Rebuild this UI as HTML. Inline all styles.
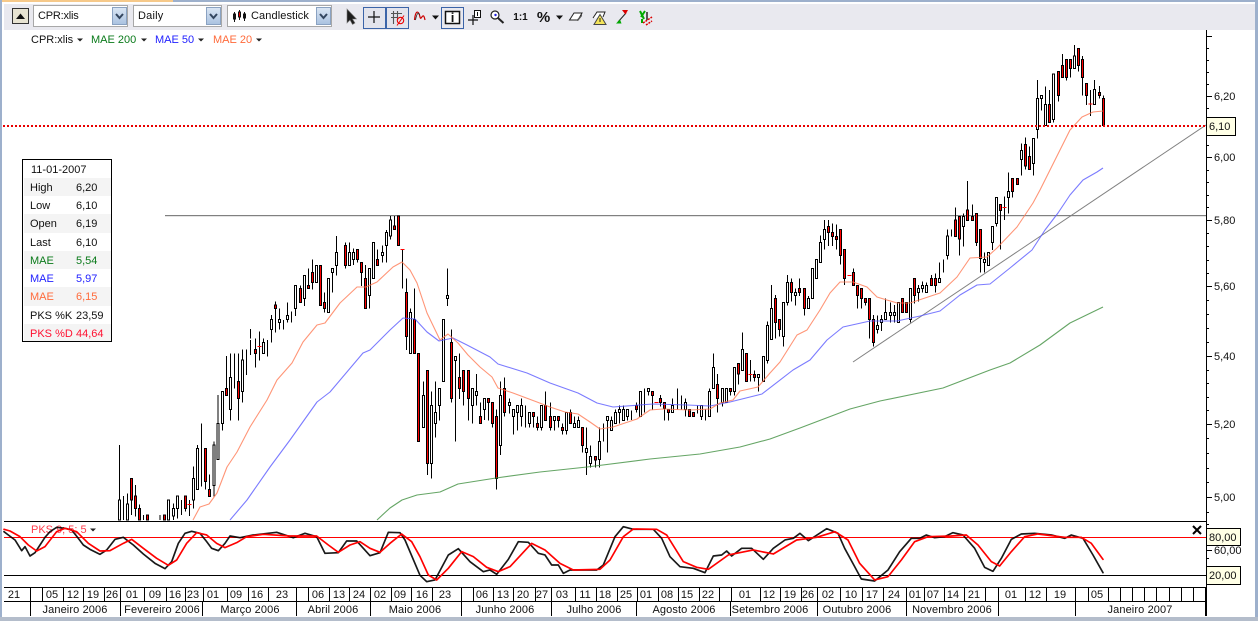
<!DOCTYPE html>
<html><head><meta charset="utf-8"><title>CPR:xlis</title>
<style>
html,body{margin:0;padding:0;background:#fff;width:1258px;height:621px;overflow:hidden}
svg{display:block}
text{font-family:"Liberation Sans",sans-serif;font-size:11px;fill:#111}
.m{text-anchor:middle}
</style></head><body>
<svg width="1258" height="621" viewBox="0 0 1258 621" xmlns="http://www.w3.org/2000/svg">
<defs>
<clipPath id="c"><rect x="2" y="30" width="1204" height="491"/></clipPath>
<linearGradient id="b" x1="0" y1="0" x2="0" y2="1"><stop offset="0" stop-color="#dbe6f4"/><stop offset="1" stop-color="#a9c2e0"/></linearGradient>
</defs>
<rect width="1258" height="621" fill="#fff"/>
<!-- frame -->
<rect x="0" y="0" width="173" height="2" fill="#f6c98a"/>
<rect x="173" y="0" width="1085" height="2" fill="#9db0cc"/>
<rect x="0" y="0" width="2" height="621" fill="#9db0cc"/>
<rect x="1255" y="0" width="3" height="621" fill="#9db0cc"/>
<rect x="0" y="617" width="1258" height="4" fill="#b4bdcb"/>
<!-- toolbar -->
<rect x="4" y="4" width="1251" height="26" fill="#e9e9ef"/>
<rect x="12.5" y="8.5" width="16" height="15" fill="#e8e4d2" stroke="#333"/>
<path d="M16 19L20.5 13.5L25 19Z" fill="#111"/>
<g fill="#fff" stroke="#a8a8a8"><rect x="33.5" y="5.5" width="94" height="21"/><rect x="133.5" y="5.5" width="88" height="21"/><rect x="227.5" y="5.5" width="104" height="21"/></g>
<g fill="url(#b)" stroke="#8aa2c2"><rect x="112.5" y="7.5" width="14" height="17"/><rect x="206.5" y="7.5" width="14" height="17"/><rect x="316.5" y="7.5" width="14" height="17"/></g>
<g fill="none" stroke="#33465f" stroke-width="2"><path d="M116 14L119.5 18L123 14"/><path d="M210 14L213.500 18L217 14"/><path d="M320 14L323.500 18L327 14"/></g>
<text x="38" y="19" style="letter-spacing:-.2px">CPR:xlis</text><text x="138" y="19" style="letter-spacing:.2px">Daily</text><text x="251" y="19" style="letter-spacing:.1px">Candlestick</text>
<path d="M234.500 12V22M239.500 10V20M244.500 12V21" stroke="#111"/>
<path d="M233.500 14h2v5h-2zM243.500 14h2v4h-2z" fill="#111" stroke="#111"/><path d="M238.500 12h2v5h-2z" fill="#e00" stroke="#111"/>
<!-- tool icons -->
<path d="M347 9V23L350 20L352.500 24.500L355 23L352.500 19H356.500Z" fill="#1d1d1d" stroke="#777" stroke-width=".6"/>
<rect x="363.500" y="7.500" width="22" height="21" fill="#e3e4ec" stroke="#3b64a8" stroke-width="1"/>
<rect x="386.500" y="7.500" width="22" height="21" fill="#e3e4ec" stroke="#3b64a8"/>
<rect x="441.500" y="7.500" width="22" height="21" fill="#e9e9ef" stroke="#3b64a8"/>
<path d="M374 11V23M368 17H380" stroke="#111" stroke-width="1.200" fill="none"/>
<path d="M393.500 11V24M397.500 11V20M391 13.500H402M391 17.500H398" stroke="#555" stroke-width="1.100" fill="none"/>
<circle cx="400.500" cy="20.500" r="3.200" fill="none" stroke="#e00" stroke-width="1.100"/><path d="M397 25.500L404 15.500" stroke="#e00"/>
<path d="M414.500 20C415.500 10 418.500 10 420 17C421 22 423 10 425 20" fill="none" stroke="#c00" stroke-width="1.200"/>
<path d="M415.500 20C417 12 419 12 419.500 15" fill="none" stroke="#222" stroke-width=".8"/>
<path d="M432 15.500H439L435.500 19.500Z" fill="#111"/>
<rect x="445.500" y="11.500" width="14" height="12" fill="#fff" stroke="#111" stroke-width="1.500"/>
<text x="452.500" y="22" class="m" style="font-weight:bold;font-size:13px">i</text>
<path d="M473 15V25M468 20H478" stroke="#111" stroke-width="1.200"/>
<rect x="474.500" y="10.500" width="6" height="7" fill="#fff" stroke="#111"/><path d="M477.500 12V16" stroke="#111"/>
<circle cx="495" cy="15" r="4" fill="#fff" stroke="#222" stroke-width="1.200"/><circle cx="495.500" cy="15" r="1.200" fill="#22d"/>
<path d="M498 18L503.500 23" stroke="#222" stroke-width="2"/>
<text x="520.500" y="20" class="m" style="font-weight:bold;font-size:10px">1:1</text>
<text x="543.500" y="22" class="m" style="font-weight:bold;font-size:15px">%</text>
<path d="M556 15.500H563L559.500 19.500Z" fill="#111"/>
<path d="M569.500 20L574 13H582L578 20H570Z" fill="#fff" stroke="#222"/><path d="M576 20.500L582 14.500V16L578 21Z" fill="#555"/>
<path d="M593 18L597 12H605L603 17" fill="#fff" stroke="#222"/>
<path d="M600 14.500L606 24.500H594Z" fill="#f4e45a" stroke="#444"/><path d="M600 18V22" stroke="#222"/>
<path d="M618 22L626 13" stroke="#222"/><path d="M616 23.500L620 19.500L621.500 23.500Z" fill="#0a0"/><path d="M622 10H628L625.500 14.500Z" fill="#d00"/>
<path d="M640 11L644 19M645 11L641 17M642 19V23" stroke="#0a0" stroke-width="2" fill="none"/><path d="M647 12V20" stroke="#555" stroke-width="2"/><path d="M643 23L652 17M646 25L652 21" stroke="#d00" stroke-width="1.500" stroke-dasharray="2 1"/>
<!-- legend -->
<text x="31" y="43">CPR:xlis</text><path d="M77 38.500h6l-3 3z" fill="#222"/>
<text x="91" y="43" style="fill:#0a7a1a">MAE 200</text><path d="M141 38.500h6l-3 3z" fill="#222"/>
<text x="155" y="43" style="fill:#2222ff">MAE 50</text><path d="M198 38.500h6l-3 3z" fill="#222"/>
<text x="213" y="43" style="fill:#ff6a3a">MAE 20</text><path d="M256 38.500h6l-3 3z" fill="#222"/>
<!-- horizontal + trend -->
<path d="M165 215.500H1206" stroke="#808080" fill="none"/>
<path d="M165 216.500H1206" stroke="#e4e4e4" fill="none"/>
<path d="M853 362L1206 125" stroke="#808080" fill="none"/>
<!-- candles -->
<g clip-path="url(#c)" shape-rendering="crispEdges">
<g transform="translate(100 210) scale(.33333)">
<path fill="none" stroke="#000" stroke-width="3" d="M58 705V930M70 858V930M82 850V930M94 805V915M106 825V920M118 883V930M130 915V930M142 915V930M180 915V930M193 915V930M205 870V930M220 880V930M232 858V925M244 870V915M256 858V905M268 870V918M280 770V895M292 705V838M304 640V830M316 715V838M328 793V860M342 695V860M354 555V748M367 544V662M379 438V557M391 430V632M403 430V535M415 430V632M427 418V578M439 418V495M451 357V385M451 390V435M466 385V472M478 365V452M490 385V430M502 390V440M514 315V398M526 275V368M538 295V358M550 330V358M562 277V338M574 305V338M586 226V318M601 226V277M613 196V288M625 175V235M637 148V238M649 166V217M661 166V286M673 248V308M685 205V307M697 175V248M709 78V197M736 97V176M748 97V166M760 115V165M772 118V158M784 157V228M796 165V295M808 175V295M820 97V205M832 118V166M847 106V158M859 60V158M871 18V88M883 18V58M895 18V106M907 118V236M919 205V420M931 295V430M943 235V430M955 430V694M970 514V652M982 481V795M994 544V805M1006 514V682"/>
<path fill="#fff" stroke="#000" stroke-width="3" d="M55 870h6V930h-6zM79 882h6V930h-6zM202 870h6V930h-6zM217 895h6V918h-6zM229 858h6V895h-6zM277 805h6V870h-6zM289 715h6V838h-6zM339 705h6V826h-6zM351 640h6V748h-6zM364 544h6V640h-6zM388 502h6V598h-6zM424 450h6V544h-6zM487 397h6V430h-6zM511 328h6V358h-6zM535 328h6V338h-6zM559 316h6V328h-6zM583 226h6V295h-6zM610 196h6V265h-6zM646 166h6V217h-6zM682 205h6V307h-6zM694 175h6V187h-6zM706 127h6V166h-6zM745 127h6V166h-6zM757 127h6V148h-6zM805 175h6V257h-6zM817 97h6V205h-6zM844 127h6V136h-6zM856 67h6V106h-6zM868 30h6V78h-6zM928 307h6V430h-6zM967 556h6V652h-6zM991 586h6V760h-6zM1003 607h6V640h-6z"/>
<path fill="#f00" stroke="#000" stroke-width="3" d="M91 805h6V870h-6zM103 858h6V895h-6zM115 895h6V930h-6zM139 915h6V930h-6zM190 915h6V930h-6zM253 858h6V895h-6zM313 715h6V815h-6zM325 838h6V860h-6zM376 535h6V557h-6zM412 514h6V565h-6zM463 418h6V430h-6zM523 285h6V295h-6zM598 235h6V277h-6zM622 226h6V235h-6zM634 187h6V217h-6zM658 166h6V286h-6zM670 277h6V295h-6zM733 106h6V166h-6zM769 118h6V148h-6zM781 157h6V187h-6zM793 205h6V295h-6zM829 148h6V166h-6zM880 48h6V58h-6zM892 18h6V106h-6zM916 247h6V380h-6zM940 328h6V430h-6zM952 430h6V694h-6zM979 481h6V760h-6z"/>
<path fill="none" stroke="#f00" stroke-width="3" d="M262 883h12M472 409h12M901 118h12"/>
</g>
<g transform="translate(400 210) scale(.33333)">
<path fill="none" stroke="#000" stroke-width="3" d="M118 535V632M130 328V515M142 175V288M154 358V578M166 440V695M178 430V567M190 481V587M205 481V632M217 535V640M229 492V587M241 578V640M253 565V630M265 565V632M277 577V652M289 598V838M301 514V735M313 502V620M328 565V610M340 598V674M352 586V662M364 565V650M376 586V652M388 607V652M400 607V652M412 620V662M424 586V662M436 544V632M451 577V662M463 619V662M475 619V652M487 640V674M499 607V674M511 598V640M523 620V652M535 620V652M547 652V728M559 652V795M571 706V772M586 740V772M598 652V772M610 640V694M622 620V728M634 620V662M646 598V640M658 586V640M670 586V632M682 598V632M694 602V630M709 578V607M721 544V620M733 535V607M745 535V556M757 544V598M781 555V590M793 577V632M805 598V632M817 565V607M832 535V598M844 556V598M856 565V620M868 598V619M880 607V619M892 586V610M904 586V630M916 598V632M928 535V620M940 430V535M952 492V607M967 535V590M979 535V578M991 535V556M1003 472V556M1015 460V523"/>
<path fill="#fff" stroke="#000" stroke-width="3" d="M115 535h6V586h-6zM127 328h6V515h-6zM139 256h6V266h-6zM163 440h6V451h-6zM214 535h6V586h-6zM226 544h6V556h-6zM250 565h6V598h-6zM298 556h6V706h-6zM325 577h6V586h-6zM337 598h6V619h-6zM349 586h6V607h-6zM361 586h6V619h-6zM385 607h6V640h-6zM421 586h6V652h-6zM460 619h6V632h-6zM496 607h6V662h-6zM520 640h6V652h-6zM532 632h6V652h-6zM556 715h6V728h-6zM568 740h6V760h-6zM595 694h6V748h-6zM619 620h6V632h-6zM631 632h6V662h-6zM643 607h6V640h-6zM655 598h6V607h-6zM667 598h6V632h-6zM679 598h6V620h-6zM718 544h6V619h-6zM742 535h6V544h-6zM814 586h6V607h-6zM853 577h6V598h-6zM901 586h6V619h-6zM925 544h6V620h-6zM937 472h6V535h-6zM964 535h6V578h-6zM976 535h6V578h-6zM1000 472h6V544h-6z"/>
<path fill="#f00" stroke="#000" stroke-width="3" d="M151 397h6V565h-6zM175 502h6V535h-6zM187 481h6V544h-6zM202 481h6V565h-6zM238 619h6V640h-6zM262 565h6V577h-6zM274 577h6V640h-6zM286 619h6V805h-6zM310 535h6V607h-6zM397 607h6V619h-6zM409 640h6V652h-6zM433 586h6V632h-6zM448 619h6V652h-6zM472 619h6V632h-6zM484 652h6V662h-6zM508 607h6V640h-6zM544 652h6V706h-6zM583 740h6V750h-6zM706 586h6V598h-6zM754 544h6V556h-6zM778 565h6V577h-6zM790 577h6V596h-6zM802 598h6V607h-6zM865 598h6V619h-6zM877 607h6V619h-6zM949 523h6V565h-6zM988 535h6V544h-6zM1012 460h6V492h-6z"/>
<path fill="none" stroke="#f00" stroke-width="3" d="M763 577h12"/>
</g>
<g transform="translate(730 170) scale(.33333)">
<path fill="none" stroke="#000" stroke-width="3" d="M37 487V602M49 550V634M61 570V635M73 601V635M85 613V665M100 559V634M112 455V580M124 345V508M136 375V505M148 448V500M160 397V530M172 315V407M184 325V395M196 355V407M208 325V378M223 355V437M235 378V415M247 295V385M259 268V325M271 197V277M283 150V238M295 150V228M307 160V228M319 163V238M331 178V283M343 238V345M370 295V346M382 346V415M394 355V415M406 385V406M418 385V505M430 435V530M442 437V490M454 435V483M466 385V450M481 397V458M493 405V458M505 397V457M517 385V427M529 397V427M541 355V458M553 325V400M565 345V395M577 335V367M589 337V367M604 315V346M616 310V367M628 277V337M640 268V308M652 178V268M664 178V200M676 112V199M688 139V257M700 130V230M712 33V152M727 103V152M739 130V228M751 178V308M763 248V308M775 247V287M787 170V240M799 82V170M811 103V238M823 80V150"/>
<path fill="#fff" stroke="#000" stroke-width="3" d="M34 538h6V602h-6zM82 613h6V623h-6zM97 559h6V634h-6zM109 466h6V571h-6zM121 415h6V508h-6zM157 397h6V500h-6zM169 337h6V397h-6zM193 367h6V376h-6zM232 385h6V415h-6zM244 295h6V385h-6zM256 268h6V325h-6zM268 217h6V277h-6zM280 178h6V208h-6zM439 466h6V478h-6zM451 448h6V458h-6zM463 427h6V448h-6zM478 427h6V437h-6zM490 427h6V437h-6zM502 397h6V457h-6zM538 355h6V448h-6zM562 355h6V367h-6zM574 346h6V355h-6zM586 346h6V367h-6zM625 325h6V337h-6zM649 198h6V257h-6zM697 139h6V170h-6zM760 268h6V277h-6zM772 247h6V287h-6zM784 170h6V217h-6zM796 82h6V160h-6z"/>
<path fill="#f00" stroke="#000" stroke-width="3" d="M46 550h6V634h-6zM70 613h6V623h-6zM133 385h6V458h-6zM145 448h6V478h-6zM181 337h6V367h-6zM205 355h6V367h-6zM220 355h6V415h-6zM292 170h6V187h-6zM304 187h6V200h-6zM316 200h6V208h-6zM328 178h6V257h-6zM340 238h6V325h-6zM367 307h6V346h-6zM379 346h6V376h-6zM391 355h6V385h-6zM403 385h6V397h-6zM415 385h6V448h-6zM427 448h6V517h-6zM514 385h6V427h-6zM526 397h6V427h-6zM550 325h6V376h-6zM601 325h6V346h-6zM613 325h6V346h-6zM673 150h6V199h-6zM685 139h6V207h-6zM709 120h6V152h-6zM724 139h6V152h-6zM736 130h6V217h-6zM748 178h6V265h-6zM808 103h6V122h-6z"/>
<path fill="none" stroke="#f00" stroke-width="3" d="M55 613h12M352 316h12M817 112h12"/>
</g>
<g transform="translate(990 30) scale(.33333)">
<path fill="none" stroke="#000" stroke-width="3" d="M55 427V550M67 445V503M82 445V463M94 340V437M106 322V418M118 350V418M130 325V437M142 150V325M154 196V242M166 170V287M178 180V277M190 132V277M205 124V214M217 72V142M229 88V152M241 88V142M253 45V115M265 55V124M277 78V197M289 160V225M301 180V258M313 150V223M328 168V205M340 196V287"/>
<path fill="#fff" stroke="#000" stroke-width="3" d="M52 485h6V502h-6zM91 362h6V388h-6zM127 325h6V400h-6zM139 205h6V298h-6zM151 196h6V205h-6zM163 223h6V287h-6zM187 132h6V268h-6zM250 78h6V115h-6zM310 178h6V223h-6z"/>
<path fill="#f00" stroke="#000" stroke-width="3" d="M64 445h6V485h-6zM79 445h6V463h-6zM103 343h6V408h-6zM115 380h6V418h-6zM175 223h6V277h-6zM202 124h6V196h-6zM214 106h6V142h-6zM226 88h6V142h-6zM238 88h6V115h-6zM262 55h6V106h-6zM274 88h6V142h-6zM286 160h6V196h-6zM325 187h6V196h-6zM337 205h6V287h-6z"/>
<path fill="none" stroke="#f00" stroke-width="3" d="M295 222h12"/>
</g>
</g>
<!-- moving averages -->
<g clip-path="url(#c)" fill="none" stroke-width="1.100" stroke-linejoin="round">
<polyline stroke="#3f8f3f" opacity=".8" points="377,520 390,508 402,500 417,495 440,492 458,484 496,478 540,472 587,467 650,459 700,454 740,447 770,439 800,428 850,409 880,401 943,388 990,370 1010,363 1040,345 1070,323 1103,307"/>
<polyline stroke="#5a5aff" opacity=".8" points="230,520 247,500 270,467 290,440 317,402 330,392 363,353 370,350 390,330 403,318 415,319 427,332 439,341 453,338 467,345 490,357 498,364 527,373 550,383 578,393 597,403 613,407 653,404 687,405 710,406 730,402 762,394 793,370 810,360 827,340 843,327 870,321 897,321 920,316 940,311 960,295 977,285 990,284 1010,268 1032,250 1045,230 1058,213 1070,195 1083,180 1097,172 1103,168"/>
<polyline stroke="#ff7a55" opacity=".8" points="193,520 200,507 209,504 217,493 227,467 237,452 250,427 267,400 277,380 292,363 303,342 317,325 325,323 340,303 357,287 366,287 377,282 393,267 402,262 410,270 417,283 427,313 440,340 448,334 458,343 468,355 480,367 492,377 498,388 513,393 537,402 550,407 565,412 578,414 590,422 600,429 613,427 637,419 650,410 663,409 690,410 710,409 720,403 733,400 740,391 758,387 770,373 780,362 797,335 807,330 820,310 830,293 840,282 853,282 867,287 877,297 897,303 910,303 940,293 957,277 970,258 987,257 997,248 1017,227 1033,203 1040,190 1050,170 1070,130 1082,117 1093,112 1103,111"/>
</g>
<!-- last price dotted -->
<path d="M3 126H1206" stroke="#e80000" stroke-width="2" stroke-dasharray="2 2" fill="none" shape-rendering="crispEdges"/>
<!-- right axis -->
<g shape-rendering="crispEdges" stroke="#000" fill="none">
<path d="M1206.500 30V616"/>
<path d="M1206 36.500h6M1206 96.500h6M1206 157.500h6M1206 220.500h6M1206 286.500h6M1206 356.500h6M1206 424.500h6M1206 497.500h6"/>
<path d="M1206 48.500h3M1206 60.500h3M1206 72.500h3M1206 84.500h3M1206 108.500h3M1206 120.500h3M1206 133.500h3M1206 145.500h3M1206 170.500h3M1206 182.500h3M1206 195.500h3M1206 207.500h3M1206 233.500h3M1206 246.500h3M1206 260.500h3M1206 273.500h3M1206 300.500h3M1206 314.500h3M1206 328.500h3M1206 342.500h3M1206 370.500h3M1206 383.500h3M1206 397.500h3M1206 410.500h3M1206 438.500h3M1206 453.500h3M1206 468.500h3M1206 482.500h3M1206 512.500h3M1206 524.500h3M1206 533.500h3M1206 541.500h3M1206 558.500h3M1206 567.500h3"/>
<path d="M1206 550.500h6"/>
</g>
<g><text x="1214" y="100">6,20</text><text x="1214" y="161">6,00</text><text x="1214" y="224">5,80</text><text x="1214" y="290">5,60</text><text x="1214" y="360">5,40</text><text x="1214" y="428">5,20</text><text x="1214" y="501">5,00</text><text x="1214" y="554">60,00</text></g>
<!-- stochastic -->
<g shape-rendering="crispEdges" fill="none">
<path d="M4 521.500H1206" stroke="#000"/>
<path d="M4 537.500H1206" stroke="#f00"/>
<path d="M4 575.500H1206" stroke="#000"/>
<path d="M4 587.500H1206" stroke="#000"/>
<path d="M4 601.500H1206" stroke="#000"/>
</g>
<text x="31" y="533" style="fill:#ff3a4a">PKS 9; 5; 5</text><path d="M90 528.500h6l-3 3z" fill="#222"/>
<g transform="scale(.33333) translate(0 1440)" fill="none" stroke="#000" stroke-width="5" stroke-linejoin="round" stroke-linecap="round">
<polyline opacity=".9" points="12,155 25,165 45,180 65,212 75,200 90,228 105,218 120,195 135,172 150,155 170,142 195,145 215,150 235,175 250,195 270,208 300,223 320,210 345,178 370,172 400,195 430,222 465,250 495,266 515,245 535,190 555,160 575,154 600,160 620,185 635,205 655,212 675,190 690,168 720,173 760,165 830,157 880,173 915,160 950,170 975,220 1015,218 1040,183 1070,183 1110,227 1140,218 1165,157 1200,158 1215,180 1260,286 1280,305 1305,300 1345,225 1375,206 1410,245 1450,275 1470,270 1490,283 1525,238 1555,185 1585,187 1615,220 1635,225 1655,255 1675,255 1690,280 1710,270 1790,270 1810,255 1845,170 1870,140 1900,148 1960,148 1985,175 2010,230 2040,260 2080,265 2115,278 2140,228 2165,225 2180,213 2195,228 2225,205 2255,205 2290,238 2320,205 2355,180 2380,175 2400,160 2425,182 2480,146 2514,160 2534,205 2564,260 2584,297 2624,303 2664,270 2699,215 2734,175 2759,175 2779,165 2804,173 2834,170 2859,158 2889,165 2924,205 2954,262 2979,274 3004,235 3034,178 3064,162 3104,160 3154,165 3194,175 3214,165 3249,175 3279,225 3309,278"/>
<polyline stroke="#f00" points="12,148 30,153 60,170 85,195 110,213 135,200 170,155 195,145 230,155 265,190 300,213 330,212 370,190 395,178 430,205 470,235 505,256 530,240 560,190 590,158 620,165 650,190 675,203 710,188 740,170 790,163 870,168 950,168 985,195 1015,217 1050,195 1080,185 1110,205 1140,217 1170,190 1205,162 1235,185 1260,230 1285,285 1310,300 1345,265 1385,215 1420,230 1460,262 1495,275 1530,260 1595,190 1635,210 1680,250 1720,270 1800,268 1830,240 1870,170 1900,147 1970,148 2000,165 2050,245 2090,262 2125,268 2185,225 2260,210 2320,222 2390,180 2450,172 2505,155 2544,180 2579,250 2624,300 2664,290 2704,240 2744,185 2784,170 2854,168 2899,165 2934,195 2974,245 2999,258 3034,215 3074,170 3114,162 3194,172 3244,172 3274,190 3309,238"/>
</g>
<!-- boxes -->
<g font-size="11">
<rect x="1206.500" y="117.500" width="29" height="18" fill="#ffffe6" stroke="#000"/><text x="1209" y="130">6,10</text>
<rect x="1206.500" y="528.500" width="34" height="17" fill="#ffffe6" stroke="#000"/><text x="1209" y="541">80,00</text>
<rect x="1206.500" y="566.500" width="34" height="18" fill="#ffffe6" stroke="#000"/><text x="1209" y="579">20,00</text>
</g>
<path d="M1193 526L1201 534M1201 526L1193 534" stroke="#000" stroke-width="2" fill="none"/>
<!-- date grid -->
<path shape-rendering="crispEdges" stroke="#000" fill="none" d="M30.500 587V601M42.500 587V601M63.500 587V601M83.500 587V601M104.500 587V601M120.500 587V601M144.500 587V601M166.500 587V601M185.500 587V601M203.500 587V601M227.500 587V601M248.500 587V601M268.500 587V601M296.500 587V601M308.500 587V601M329.500 587V601M349.500 587V601M370.500 587V601M391.500 587V601M411.500 587V601M432.500 587V601M461.500 587V601M473.500 587V601M493.500 587V601M513.500 587V601M535.500 587V601M551.500 587V601M575.500 587V601M596.500 587V601M617.500 587V601M637.500 587V601M658.500 587V601M678.500 587V601M699.500 587V601M719.500 587V601M731.500 587V601M760.500 587V601M780.500 587V601M801.500 587V601M817.500 587V601M840.500 587V601M862.500 587V601M883.500 587V601M906.500 587V601M924.500 587V601M944.500 587V601M964.500 587V601M985.500 587V601M998.500 587V601M1025.500 587V601M1046.500 587V601M1075.500 587V601M1088.500 587V601M1108.500 587V601M1120.500 587V601M1132.500 587V601M1144.500 587V601M1156.500 587V601M1169.500 587V601M1181.500 587V601M1193.500 587V601M1205.500 587V601M30.500 601V616M120.500 601V616M202.500 601V616M296.500 601V616M370.500 601V616M461.500 601V616M551.500 601V616M636.500 601V616M730.500 601V616M817.500 601V616M906.500 601V616M998.500 601V616M1075.500 601V616M1205.500 601V616"/>
<g text-anchor="middle">
<text x="14" y="598">21</text><text x="52" y="598">05</text><text x="73" y="598">12</text><text x="93" y="598">19</text><text x="112" y="598">26</text><text x="132" y="598">01</text><text x="155" y="598">09</text><text x="175" y="598">16</text><text x="193" y="598">23</text><text x="213" y="598">01</text><text x="236" y="598">09</text><text x="257" y="598">16</text><text x="282" y="598">23</text><text x="318" y="598">06</text><text x="339" y="598">13</text><text x="359" y="598">24</text><text x="380" y="598">02</text><text x="400" y="598">09</text><text x="422" y="598">16</text><text x="445" y="598">23</text><text x="482" y="598">06</text><text x="503" y="598">13</text><text x="523" y="598">20</text><text x="542" y="598">27</text><text x="562" y="598">03</text><text x="585" y="598">11</text><text x="605" y="598">18</text><text x="626" y="598">25</text><text x="646" y="598">01</text><text x="667" y="598">08</text><text x="687" y="598">15</text><text x="708" y="598">22</text><text x="745" y="598">01</text><text x="769" y="598">12</text><text x="790" y="598">19</text><text x="808" y="598">26</text><text x="828" y="598">02</text><text x="851" y="598">10</text><text x="872" y="598">17</text><text x="894" y="598">24</text><text x="915" y="598">01</text><text x="933" y="598">07</text><text x="953" y="598">14</text><text x="974" y="598">21</text><text x="1011" y="598">01</text><text x="1035" y="598">12</text><text x="1060" y="598">19</text><text x="1097" y="598">05</text>
<g style="letter-spacing:.12px"><text x="75" y="613">Janeiro 2006</text><text x="162" y="613">Fevereiro 2006</text><text x="250" y="613">Março 2006</text><text x="333" y="613">Abril 2006</text><text x="415" y="613">Maio 2006</text><text x="505" y="613">Junho 2006</text><text x="594" y="613">Julho 2006</text><text x="684" y="613">Agosto 2006</text><text x="770" y="613">Setembro 2006</text><text x="857" y="613">Outubro 2006</text><text x="952" y="613">Novembro 2006</text><text x="1140" y="613">Janeiro 2007</text></g>
</g>
<!-- info box -->
<rect x="22.500" y="159.500" width="89" height="182" fill="#fff" stroke="#000"/>
<g fill="#f4f4f4"><rect x="24" y="178" width="87" height="18"/><rect x="24" y="214" width="87" height="19"/><rect x="24" y="251" width="87" height="18"/><rect x="24" y="287" width="87" height="19"/><rect x="24" y="324" width="87" height="17"/></g>
<text x="31" y="173">11-01-2007</text>
<text x="30" y="191">High</text><text x="76" y="191">6,20</text>
<text x="30" y="209">Low</text><text x="76" y="209">6,10</text>
<text x="30" y="227">Open</text><text x="76" y="227">6,19</text>
<text x="30" y="246">Last</text><text x="76" y="246">6,10</text>
<text x="30" y="264" style="fill:#0a7a1a">MAE</text><text x="76" y="264" style="fill:#0a7a1a">5,54</text>
<text x="30" y="282" style="fill:#2222ff">MAE</text><text x="76" y="282" style="fill:#2222ff">5,97</text>
<text x="30" y="300" style="fill:#ff6a3a">MAE</text><text x="76" y="300" style="fill:#ff6a3a">6,15</text>
<text x="30" y="319">PKS %K</text><text x="76" y="319">23,59</text>
<text x="30" y="337" style="fill:#ff1030">PKS %D</text><text x="76" y="337" style="fill:#ff1030">44,64</text>
</svg>
</body></html>
